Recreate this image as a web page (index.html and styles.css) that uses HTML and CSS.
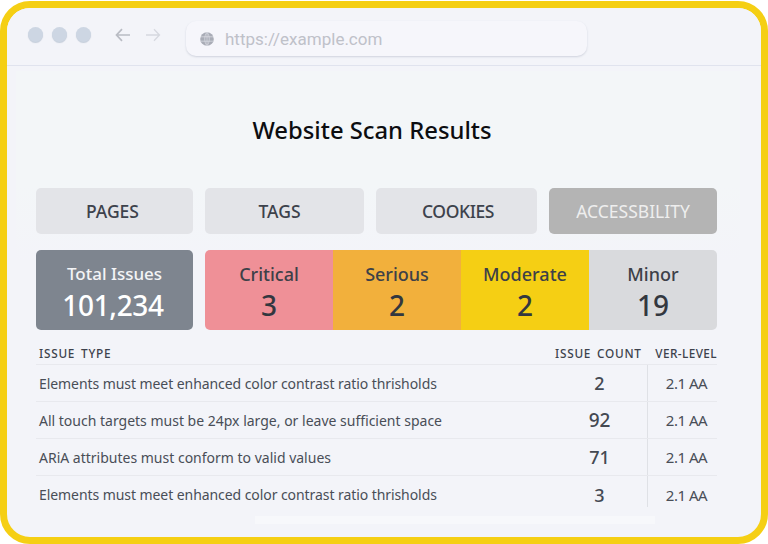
FILE: index.html
```html
<!DOCTYPE html>
<html lang="en">
<head>
<meta charset="utf-8">
<title>Website Scan Results</title>
<link rel="stylesheet" href="styles.css">
</head>
<body>
<div class="frame">
  <header class="toolbar">
    <div class="dots"><span class="dot"></span><span class="dot"></span><span class="dot"></span></div>
    <div class="arrows">
      <svg class="arrow back" viewBox="0 0 16 14" width="16" height="14"><path d="M15 7H1.500M7 1.200 1.500 7 7 12.800" fill="none" stroke="currentColor" stroke-width="1.700"/></svg>
      <svg class="arrow forward" viewBox="0 0 16 14" width="16" height="14"><path d="M1 7h13.500M9 1.200 14.500 7 9 12.800" fill="none" stroke="currentColor" stroke-width="1.300"/></svg>
    </div>
    <div class="urlbar">
      <svg class="globe" viewBox="0 0 14 14" width="14" height="14"><circle cx="7" cy="7" r="6.800" fill="#a9acb6"/><path d="M.8 4.800h12.400M.8 9.200h12.400M7 .5v13M7 .5C4 3 4 11 7 13.500M7 .5c3 2.500 3 10.500 0 13" fill="none" stroke="#e6e7ee" stroke-width=".6"/></svg>
      <span class="url">https://example.com</span>
    </div>
  </header>
  <main class="page">
    <h1 class="title">Website Scan Results</h1>
    <nav class="tabs">
      <div class="tab tab-pages">PAGES</div>
      <div class="tab tab-tags">TAGS</div>
      <div class="tab tab-cookies">COOKIES</div>
      <div class="tab active">ACCESSBILITY</div>
    </nav>
    <section class="stats">
      <div class="stat total"><span class="label">Total Issues</span><span class="value">101,234</span></div>
      <div class="strip">
        <div class="stat critical"><span class="label">Critical</span><span class="value">3</span></div>
        <div class="stat serious"><span class="label">Serious</span><span class="value">2</span></div>
        <div class="stat moderate"><span class="label">Moderate</span><span class="value">2</span></div>
        <div class="stat minor"><span class="label">Minor</span><span class="value">19</span></div>
      </div>
    </section>
    <section class="table">
      <div class="thead">
        <span class="th">ISSUE TYPE</span>
        <span class="th th-count">ISSUE COUNT</span>
        <span class="th th-level">VER-LEVEL</span>
      </div>
      <div class="row"><span class="issue tight">Elements must meet enhanced color contrast ratio thrisholds</span><span class="count">2</span><span class="level">2.1 AA</span></div>
      <div class="row"><span class="issue">All touch targets must be 24px large, or leave sufficient space</span><span class="count big">92</span><span class="level">2.1 AA</span></div>
      <div class="row"><span class="issue">ARiA attributes must conform to valid values</span><span class="count">71</span><span class="level">2.1 AA</span></div>
      <div class="row last"><span class="issue tight">Elements must meet enhanced color contrast ratio thrisholds</span><span class="count">3</span><span class="level">2.1 AA</span></div>
    </section>
  </main>
</div>
</body>
</html>
```
FILE: styles.css
```css
* { box-sizing: border-box; }
html, body { margin: 0; padding: 0; background: #fff; }
body { width: 768px; height: 544px; overflow: hidden; font-family: "Noto Sans", "Open Sans", sans-serif; }

.frame {
  width: 768px;
  height: 543px;
  margin-top: 1px;
  border: 7px solid #f5cf14;
  border-radius: 30px;
  background: #f3f4f9;
  overflow: hidden;
}

.toolbar {
  height: 58px;
  display: flex;
  align-items: flex-start;
  border-bottom: 1px solid #e0e3ee;
  background: #f3f4f9;
  padding: 19px 0 0 21px;
}
.dots { display: flex; gap: 9px; }
.dot { width: 15px; height: 15px; border-radius: 50%; background: #cdd6e3; box-shadow: 0 1px 1px #c3ccd9; }
.arrows { display: flex; gap: 14px; margin: 1px 0 0 24px; }
.arrow.back { color: #b9bcc4; }
.arrow.forward { color: #d6d8df; }
.urlbar {
  width: 401px;
  height: 35px;
  margin: -6px 0 0 25px;
  display: flex;
  align-items: center;
  gap: 11px;
  padding: 1px 0 0 14px;
  background: #f6f6fb;
  border-radius: 10px;
  box-shadow: 0 1px 2px rgba(120, 125, 150, .28);
}
.url { font-family: Roboto, sans-serif; font-size: 17px; color: #bfc1c9; }

.page {
  height: 471px;
  padding: 0 44px 0 29px;
  background:
    linear-gradient(#f7f8fb, #f7f8fb) no-repeat 248px 450px / 400px 8px,
    linear-gradient(#f3f6f8 60%, #f3f4f9) no-repeat 9px 5px / 724px 190px;
}
.title {
  margin: 0;
  padding: 48px 9px 0 0;
  height: 122px;
  font-size: 23.800px;
  font-weight: 500;
  line-height: 32px;
  color: #0c0d10;
  text-align: center;
  width: 681px;
}

.tabs { display: grid; grid-template-columns: 157px 159px 161px 168px; column-gap: 12px; width: 681px; }
.tab {
  height: 46px;
  display: flex;
  align-items: center;
  justify-content: center;
  background: #e3e4e8;
  border-radius: 5px;
  font-size: 17.500px;
  font-weight: 500;
  color: #3d424c;
}
.tab-pages { padding-right: 4px; }
.tab-tags { padding-right: 10px; }
.tab-cookies { padding-left: 3px; letter-spacing: -.4px; }
.tab.active { background: #b4b4b4; color: #eeeeee; font-weight: 400; }

.stats { display: grid; grid-template-columns: 157px 512px; column-gap: 12px; margin-top: 16px; }
.strip { display: grid; grid-template-columns: repeat(4, 128px); border-radius: 5px; overflow: hidden; }
.stat { height: 80px; display: flex; flex-direction: column; align-items: center; padding-top: 10px; color: #33373f; }
.label { font-size: 18px; font-weight: 500; line-height: 28px; color: #3d4048; }
.value { font-size: 28px; font-weight: 500; line-height: 34px; }
.total { background: #7e858f; border-radius: 5px; color: #fff; }
.total .label { color: #f3f4f6; font-size: 17px; }
.total .value { letter-spacing: -.35px; padding-right: 3px; }
.critical { background: #ef9097; }
.serious { background: #f2b03c; }
.moderate { background: #f5cf14; }
.minor { background: #d9dadd; }

.table { margin-top: 14px; width: 681px; }
.thead { display: grid; grid-template-columns: 1fr 90px 72px; height: 21px; align-items: center; border-bottom: 1px solid #e8e9ee; padding: 0 0 2px 3px; }
.th { font-size: 11.800px; font-weight: 500; letter-spacing: .75px; word-spacing: 2px; color: #3d424c; line-height: 16px; white-space: nowrap; }
.th-level { word-spacing: 0; letter-spacing: .4px; text-align: right; }
.row { display: grid; grid-template-columns: 1fr 111px 70px; height: 37px; align-items: center; border-bottom: 1px solid #e8e9ee; padding-left: 3px; }
.row.last { border-bottom: 0; }
.issue { font-size: 14px; color: #494e57; }
.issue.tight { letter-spacing: -.07px; }
.count { font-size: 18px; font-weight: 500; color: #444952; text-align: center; padding-left: 16px; }
.count.big { font-size: 19px; }
.level {
  height: 100%;
  display: flex;
  align-items: center;
  justify-content: center;
  border-left: 1px solid #dfe1e6;
  padding-left: 8px;
  font-size: 15px;
  letter-spacing: -.5px;
  color: #494e57;
}
.last .level { height: 31px; align-self: start; padding-top: 6px; }
```
